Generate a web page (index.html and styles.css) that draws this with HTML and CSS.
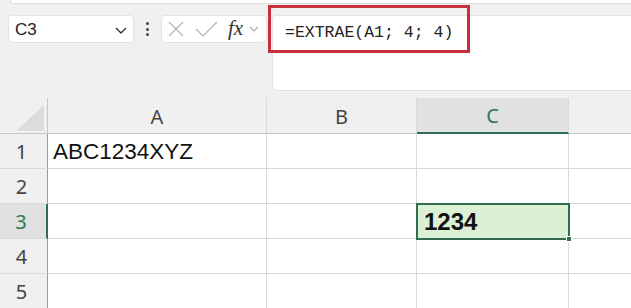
FILE: index.html
```html
<!DOCTYPE html>
<html>
<head>
<meta charset="utf-8">
<link rel="stylesheet" href="styles.css">
</head>
<body>
<div class="app">
  <div class="ribbon-edge"></div>
  <div class="toolbar">
    <div class="namebox">
      <span class="name">C3</span>
      <svg class="chev" width="12" height="7" viewBox="0 0 12 7"><path d="M1 1 L6 6 L11 1" fill="none" stroke="#333" stroke-width="1.4"/></svg>
    </div>
    <div class="kebab"><i></i><i></i><i></i></div>
    <div class="fxbox">
      <svg width="16" height="16" viewBox="0 0 16 16"><path d="M1 1 L15 15 M15 1 L1 15" fill="none" stroke="#b4b4b4" stroke-width="1.2"/></svg>
      <svg width="23" height="16" viewBox="0 0 23 16"><path d="M1 8 L8 15 L22 1" fill="none" stroke="#b4b4b4" stroke-width="1.2"/></svg>
      <span class="fx">fx</span>
      <svg width="10" height="6" viewBox="0 0 10 6"><path d="M1 1 L5 5 L9 1" fill="none" stroke="#a8a8a8" stroke-width="1.1"/></svg>
    </div>
    <div class="formula">=EXTRAE(A1; 4; 4)</div>
    <div class="highlight"></div>
  </div>
  <div class="sheet">
    <div class="corner"><div class="tri"></div></div>
    <div class="colhead">A</div>
    <div class="colhead">B</div>
    <div class="colhead sel">C</div>
    <div class="colhead last"></div>

    <div class="rowhead">1</div>
    <div class="cell text">ABC1234XYZ</div>
    <div class="cell"></div>
    <div class="cell"></div>
    <div class="cell last"></div>

    <div class="rowhead">2</div>
    <div class="cell"></div>
    <div class="cell"></div>
    <div class="cell"></div>
    <div class="cell last"></div>

    <div class="rowhead sel">3</div>
    <div class="cell"></div>
    <div class="cell"></div>
    <div class="cell active"><span>1234</span><i class="handle"></i></div>
    <div class="cell last"></div>

    <div class="rowhead">4</div>
    <div class="cell"></div>
    <div class="cell"></div>
    <div class="cell"></div>
    <div class="cell last"></div>

    <div class="rowhead">5</div>
    <div class="cell"></div>
    <div class="cell"></div>
    <div class="cell"></div>
    <div class="cell last"></div>
  </div>
</div>
</body>
</html>
```
FILE: styles.css
```css
* { box-sizing: border-box; }
html, body { margin: 0; padding: 0; }
body {
  width: 631px;
  height: 308px;
  overflow: hidden;
  background: #f0f0f0;
  font-family: "Liberation Sans", Arial, sans-serif;
}
.app { width: 631px; }
.ribbon-edge {
  height: 4px;
  margin-left: 10px;
  background: #fff;
  border-bottom: 1px solid #dcdcdc;
  border-left: 1px solid #dcdcdc;
  border-bottom-left-radius: 6px;
}
.toolbar {
  position: relative;
  display: flex;
  align-items: flex-start;
  padding-left: 8px;
  margin-top: 11px;
  height: 76px;
}
.toolbar > * { flex-shrink: 0; }
.namebox {
  width: 126px;
  height: 28px;
  background: #fff;
  border: 1px solid #e2e2e2;
  border-radius: 4px;
  display: flex;
  align-items: center;
  justify-content: space-between;
  padding: 0 6px 0 6px;
}
.name { font-size: 17px; color: #222; margin-top: 1px; }
.chev { margin-top: 2px; }
.kebab {
  width: 27px;
  height: 28px;
  display: flex;
  flex-direction: column;
  align-items: center;
  justify-content: center;
  gap: 2.5px;
}
.kebab i { width: 3px; height: 3px; border-radius: 50%; background: #444; display: block; }
.fxbox {
  width: 106px;
  height: 28px;
  background: #fff;
  border: 1px solid #e2e2e2;
  border-radius: 4px;
  display: flex;
  align-items: center;
  padding-left: 6px;
  gap: 12px;
}
.fxbox svg:nth-child(2) { margin-left: -1px; }
.fx {
  font-family: "Liberation Serif", serif;
  font-style: italic;
  font-size: 21px;
  color: #333;
  margin-left: -2px;
  margin-top: -2px;
}
.fxbox svg:last-child { margin-left: -6px; }
.formula {
  margin-left: 5px;
  width: 380px;
  height: 76px;
  background: #fff;
  border: 1px solid #e2e2e2;
  border-radius: 5px;
  font-family: "Liberation Mono", "DejaVu Sans Mono", monospace;
  font-size: 16.5px;
  color: #222;
  padding: 7px 0 0 12px;
  line-height: 20px;
}
.highlight {
  position: absolute;
  left: 268px;
  top: -10px;
  width: 202px;
  height: 48px;
  border: 3px solid #c8303c;
}
.sheet {
  margin-top: 7px;
  display: grid;
  grid-template-columns: 48px 219px 150px 152px 62px;
  grid-template-rows: 36px 35px 35px 35px 35px 35px;
}
.corner {
  border-right: 1px solid #c6c6c6;
  border-bottom: 1px solid #c6c6c6;
  position: relative;
}
.tri {
  position: absolute;
  right: 3px;
  bottom: 2px;
  width: 0; height: 0;
  border-left: 28px solid transparent;
  border-bottom: 26px solid #dcdcdc;
}
.colhead {
  border-right: 1px solid #dadada;
  border-bottom: 1px solid #c6c6c6;
  font-family: "Noto Sans", "Open Sans", sans-serif;
  font-size: 20px;
  color: #444;
  display: flex;
  align-items: center;
  justify-content: center;
  padding-top: 1px;
}
.colhead.sel {
  background: #e1e1e1;
  color: #2a7a52;
  border-bottom: 2px solid #2e6e4e;
}
.colhead.last { border-right: none; }
.rowhead {
  border-right: 1px solid #9a9a9a;
  border-bottom: 1px solid #dadada;
  font-family: "Noto Sans", "Open Sans", sans-serif;
  font-size: 20px;
  color: #444;
  display: flex;
  align-items: center;
  justify-content: center;
  padding-right: 4px;
}
.rowhead.sel {
  background: #e1e1e1;
  color: #2a7a52;
  border-right: 2px solid #2e6e4e;
}
.cell {
  background: #fff;
  border-right: 1px solid #d9d9d9;
  border-bottom: 1px solid #d9d9d9;
  display: flex;
  align-items: center;
}
.cell.last { border-right: none; }
.cell.text {
  font-size: 22.5px;
  color: #111;
  padding-left: 5px;
  padding-top: 2px;
}
.cell.active {
  position: relative;
  background: #dbf0d5;
  outline: 2px solid #2e6e4e;
  outline-offset: -1px;
  font-size: 24px;
  font-weight: bold;
  color: #111;
  padding-left: 7px;
  padding-top: 1px;
  z-index: 1;
}
.handle {
  position: absolute;
  right: -4px;
  bottom: -4px;
  width: 6px;
  height: 6px;
  background: #2e6e4e;
  border: 1px solid #fff;
  display: block;
}
```
